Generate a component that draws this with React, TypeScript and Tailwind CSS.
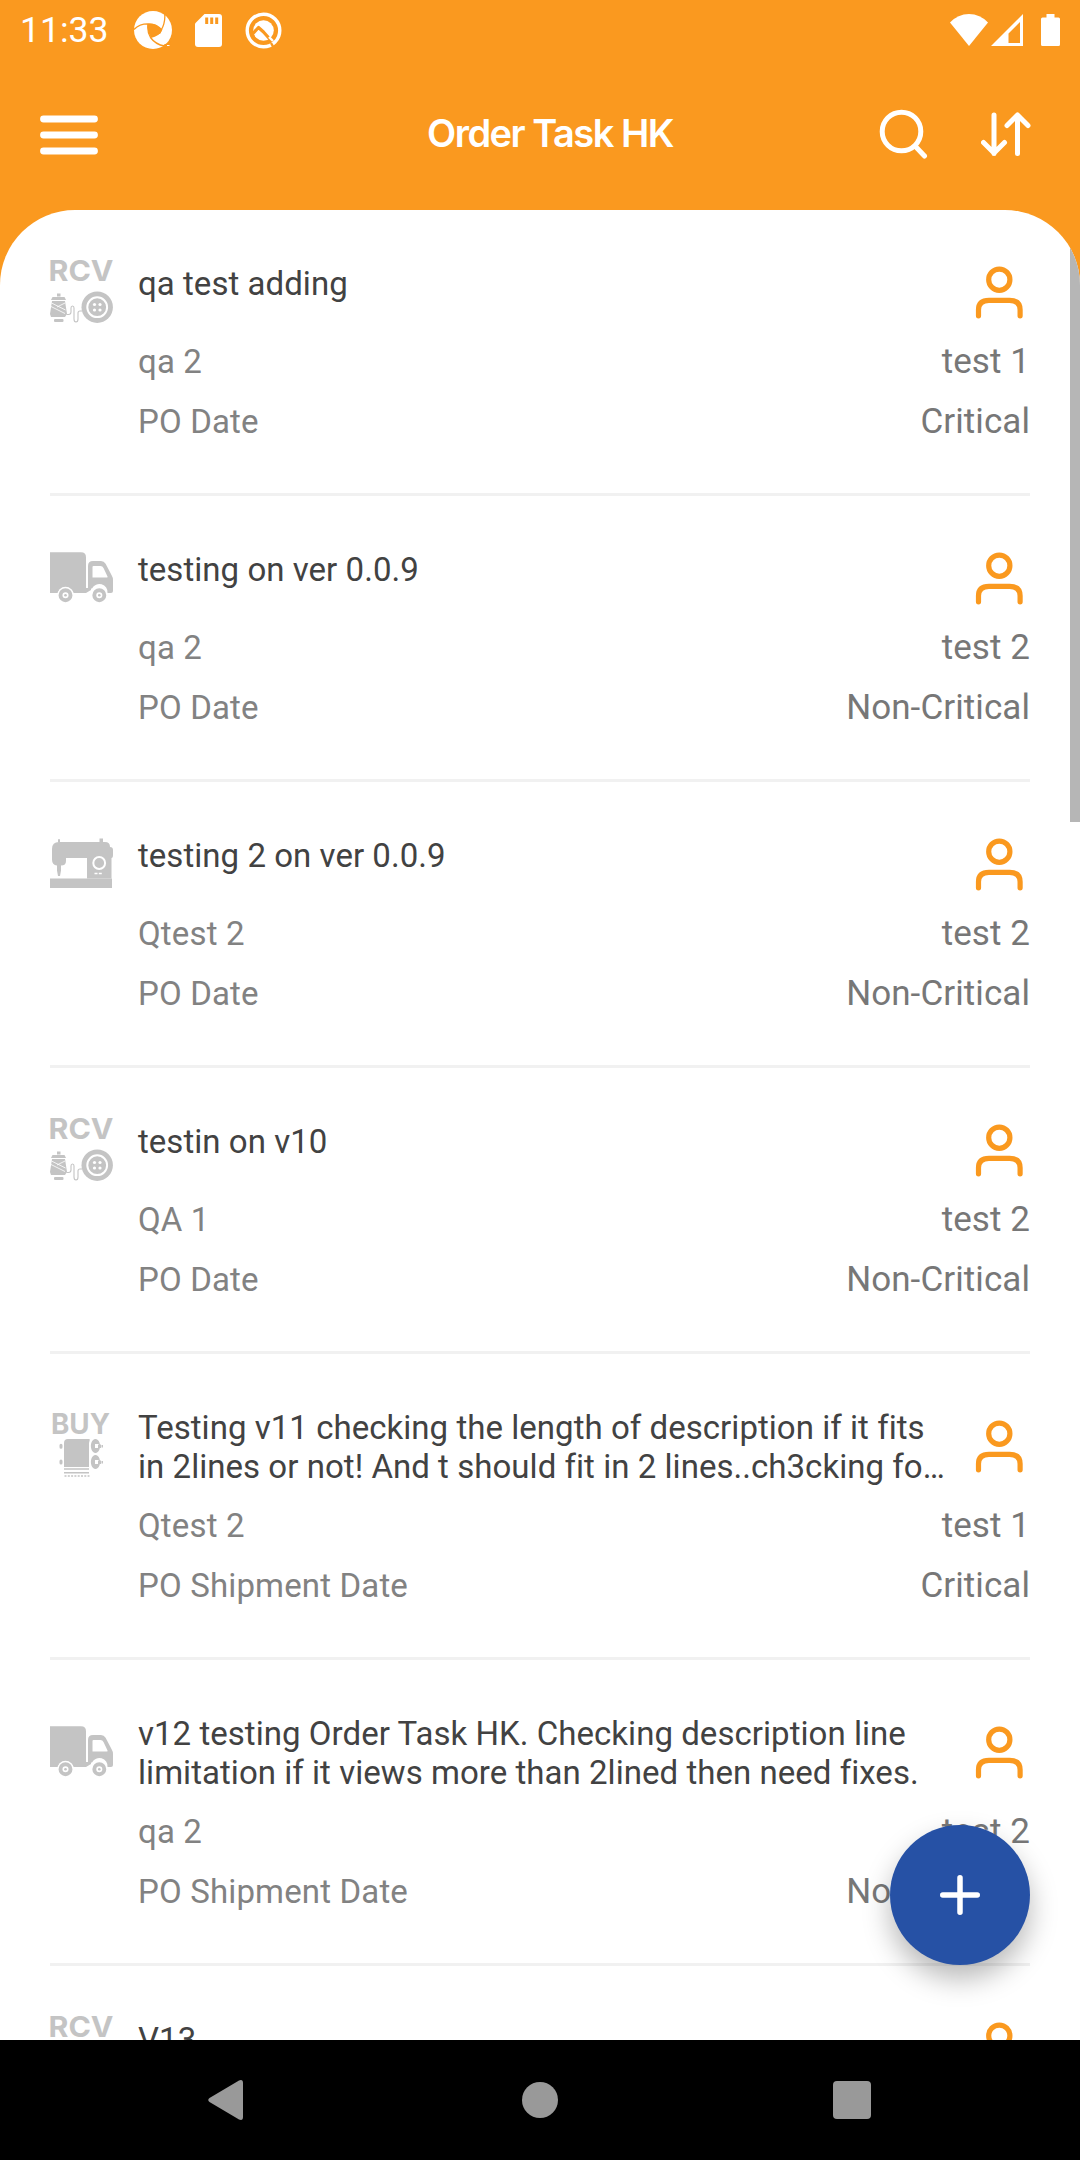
import React from "react";

type IconKind = "rcv" | "truck" | "sewing" | "buy";

interface Task {
  icon: IconKind;
  title: string[];
  owner: string;
  dateKind: string;
  test: string;
  priority: string;
}

const tasks: Task[] = [
  { icon: "rcv", title: ["qa test adding"], owner: "qa 2", dateKind: "PO Date", test: "test 1", priority: "Critical" },
  { icon: "truck", title: ["testing on ver 0.0.9"], owner: "qa 2", dateKind: "PO Date", test: "test 2", priority: "Non-Critical" },
  { icon: "sewing", title: ["testing 2 on ver 0.0.9"], owner: "Qtest 2", dateKind: "PO Date", test: "test 2", priority: "Non-Critical" },
  { icon: "rcv", title: ["testin on v10"], owner: "QA 1", dateKind: "PO Date", test: "test 2", priority: "Non-Critical" },
  {
    icon: "buy",
    title: ["Testing v11 checking the length of description if it fits", "in 2lines or not! And t should fit in 2 lines..ch3cking fo…"],
    owner: "Qtest 2",
    dateKind: "PO Shipment Date",
    test: "test 1",
    priority: "Critical",
  },
  {
    icon: "truck",
    title: ["v12 testing Order Task HK. Checking description line", "limitation if it views more than 2lined then need fixes."],
    owner: "qa 2",
    dateKind: "PO Shipment Date",
    test: "test 2",
    priority: "Non-Critical",
  },
  { icon: "rcv", title: ["V13"], owner: "qa 2", dateKind: "PO Date", test: "test 2", priority: "Critical" },
];

function RcvIcon() {
  return (
    <svg viewBox="0 0 63 63" className="size-[63px] shrink-0 overflow-visible" fill="#c4c4c4">
      <text x="-1.5" y="21" fontFamily="Inter" fontWeight="700" fontSize="29" textLength="65" lengthAdjust="spacingAndGlyphs">RCV</text>
      <rect x="7" y="33.5" width="3.5" height="3" />
      <path d="M2.5 37h12l1.500 3H1z" />
      <path d="M2 41h13l2 13-2 3H1L0 54z" />
      <path d="M1.500 43l14 7M1 46.500l14 7M15 43L7 47" stroke="#fff" strokeWidth="0.8" />
      <rect x="4" y="59" width="9.500" height="3" rx="1" />
      <path d="M16.500 54.500h2q2.500 0 2.500-2.500v-4q0-2 1.500-2t1.500 2v11q0 3 2 3t2-3v-6q0-2 2-2h2" fill="none" stroke="#c4c4c4" strokeWidth="1.100" />
      <circle cx="47.200" cy="47.200" r="15.700" />
      <circle cx="47.200" cy="47.200" r="9.900" fill="none" stroke="#fff" strokeWidth="2" />
      <g fill="#fff">
        <circle cx="44.500" cy="44.500" r="1.600" />
        <circle cx="50" cy="44.500" r="1.600" />
        <circle cx="44.500" cy="50" r="1.600" />
        <circle cx="50" cy="50" r="1.600" />
      </g>
    </svg>
  );
}

function TruckIcon() {
  return (
    <svg viewBox="0 0 63 63" className="size-[63px] shrink-0" fill="#c4c4c4">
      <path d="M0 6.200h31q5 0 5 5V47H23.500A8.200 8.200 0 0 0 8 47H0z" />
      <path fillRule="evenodd" d="M38 20q0-5 5-5h8q3 0 4.600 2.800L61.500 29q1.500 2.500 1.500 5v11q0 2-2 2h-3.500A8.200 8.200 0 0 0 42 42.500H38zM42.500 21v10.500h14.500q1 0 .5-1L53.500 22q-1-2-3-2H43.500q-1 0-1 1z" />
      <path d="M36 42h5v2l-5 3z" />
      <circle cx="15.500" cy="49" r="8.200" fill="#fff" />
      <circle cx="49.300" cy="49" r="8.200" fill="#fff" />
      <g fill="none" stroke="#c4c4c4" strokeWidth="3.900">
        <circle cx="15.500" cy="49.200" r="5" />
        <circle cx="49.300" cy="49.200" r="5" />
      </g>
      <circle cx="15.500" cy="49.200" r="1.300" />
      <circle cx="49.300" cy="49.200" r="1.300" />
    </svg>
  );
}

function SewingIcon() {
  return (
    <svg viewBox="0 0 63 63" className="size-[63px] shrink-0" fill="#c4c4c4">
      <path d="M8 7.500q1-1 2 0v3H8zM49.500 6.500h3.500v4h-3.500z" />
      <path d="M2 17q0-7 7-7h46q5 0 5 5 3 0 3 3v5q0 3-1.500 3v20.500H37V26H16v3q0 4.500-5 4.500v5L10 44H8l-1-5.500v-5q-5-.5-5-6z" />
      <path d="M0 46.500h62V56H0z" />
      <circle cx="49.200" cy="31" r="5.900" fill="none" stroke="#fff" strokeWidth="2" />
      <path d="M44.500 41.500h3M48.800 41.500h3" stroke="#fff" strokeWidth="1.400" />
    </svg>
  );
}

function BuyIcon() {
  return (
    <svg viewBox="0 0 63 63" className="size-[63px] shrink-0 overflow-visible" fill="#c4c4c4">
      <text x="1" y="20" fontFamily="Inter" fontWeight="700" fontSize="28" textLength="59" lengthAdjust="spacingAndGlyphs">BUY</text>
      <path d="M14 29q0-4 4-4h21q1.500 0 .5 2l-.5 2v24H14z" />
      <path d="M9.500 31.200a1.500 1.500 0 0 1 3 0v2a1.500 1.500 0 0 1-3 0zM9.500 47a1.500 1.500 0 0 1 3 0v2a1.500 1.500 0 0 1-3 0z" />
      <path fillRule="evenodd" d="M45.500 25a4.600 7 0 1 1-.1 0zM45 30h4v4h-4zM45.500 41a4.600 7 0 1 1-.1 0zM45 46h4v4h-4z" />
      <path d="M48 30.500h3v3.500h-3zM51.500 31h1.500v2.500h-1.500zM48 46.500h3V50h-3zM51.500 47h1.500v2.500h-1.500z" />
      <path d="M14 55h25M14 58.700h25" stroke="#c4c4c4" strokeWidth="1.600" />
      <path d="M14.500 62h25" stroke="#c4c4c4" strokeWidth="1.400" strokeDasharray="2 1.300" />
    </svg>
  );
}

const icons: Record<IconKind, () => React.JSX.Element> = { rcv: RcvIcon, truck: TruckIcon, sewing: SewingIcon, buy: BuyIcon };

function PersonIcon() {
  return (
    <svg viewBox="0 0 60 60" className="size-[60px] shrink-0" fill="none" stroke="#fa991f" strokeWidth="5.200" strokeLinecap="round">
      <circle cx="29.300" cy="17.700" r="10.600" />
      <path d="M8.500 53.800v-6q0-9.500 10.500-9.500h20.600q10.500 0 10.500 9.500v6" />
    </svg>
  );
}

function TaskRow({ task }: { task: Task }) {
  const Icon = icons[task.icon];
  return (
    <li className="mx-[50px] shrink-0 border-b-[3px] border-[#f1f1f1] pt-[50px] pb-[41px]">
      <div className="flex items-center">
        <Icon />
        <div className="min-w-0 flex-1 self-start pt-[4px] pb-px pl-[25px] text-[33px] leading-[39px] tracking-[0.04px] whitespace-nowrap text-[#424242]">
          {task.title.map((line) => (
            <div key={line}>{line}</div>
          ))}
        </div>
        <PersonIcon />
      </div>
      <div className="flex justify-between pt-[9px] pl-[88px] leading-[60px]">
        <div className="text-[33px] tracking-[0.15px] text-[#828282]">
          <div>{task.owner}</div>
          <div>{task.dateKind}</div>
        </div>
        <div className="text-right text-[35px] tracking-[0.08px] text-[#777]">
          <div>{task.test}</div>
          <div>{task.priority}</div>
        </div>
      </div>
    </li>
  );
}

function StatusBar() {
  return (
    <div className="flex h-[60px] shrink-0 items-center pr-5 pl-5 text-white">
      <span className="w-[114px] pt-0.5 text-[35.5px] leading-none">11:33</span>
      <svg viewBox="0 0 38 38" className="size-[38px]">
        <circle cx="19" cy="19" r="19" fill="#fff" />
        <path d="M13.500 13q5-1 9 1l5.500 4.500-1.500 4-9.500 4q-4-6-3.500-13.500z" fill="#fa991f" />
        <path d="M0 18.500q6-6 15-5.500 8 .5 13 6M30.500 1q1.500 10-3.500 18.500M28 18q-2 6-12 8.500M14 13q-1 8 2.500 13.500 5 7 14 8.500" fill="none" stroke="#fa991f" strokeWidth="1.300" />
        <path d="M30 33.500l8-3V38h-10z" fill="#fa991f" />
        <path d="M33 34.500h2.500" stroke="#fff" strokeWidth="1" />
      </svg>
      <svg viewBox="0 0 27 33" className="ml-[23px] h-[33px] w-[27px]">
        <path d="M9.500 0H24q3 0 3 3v27q0 3-3 3H3q-3 0-3-3V9.500z" fill="#fff" />
        <path d="M11.700 3.500v6.500M16.700 3.500v6.500M21.700 3.500v6.500" stroke="#fa991f" strokeWidth="3" />
      </svg>
      <svg viewBox="0 0 37 37" className="ml-[23px] size-[37px]">
        <circle cx="18.500" cy="18.500" r="16.300" fill="none" stroke="#fff" strokeWidth="3.400" />
        <circle cx="18.500" cy="18.500" r="10.300" fill="#fff" />
        <path d="M7 22.500l6.500-7 5 4.500 8 9" fill="none" stroke="#fa991f" strokeWidth="3.200" strokeLinejoin="round" />
        <path d="M24 25l4 4" stroke="#fff" strokeWidth="2.400" />
        <path d="M26 31l3.500 6" stroke="#fa991f" strokeWidth="2.400" />
      </svg>
      <div className="ml-auto flex items-center">
        <svg viewBox="0 0 38 32" className="h-8 w-[38px]" fill="#fff">
          <path d="M0 8.500Q8 0 19 0t19 8.500L19 32z" />
        </svg>
        <svg viewBox="0 0 32 32" className="ml-[3px] size-8" fill="#fff">
          <path fillRule="evenodd" d="M32 0v32H0zM29 8L17.500 19.500v9.500H29z" />
        </svg>
        <svg viewBox="0 0 19 32" className="ml-[18px] h-8 w-[19px]" fill="#fff">
          <path d="M5.500 0h8v3.500H17.500q1.500 0 1.500 1.500V30.500q0 1.500-1.500 1.500H1.500Q0 32 0 30.500V5q0-1.500 1.500-1.500h4z" />
        </svg>
      </div>
    </div>
  );
}

function AppBar() {
  return (
    <header className="grid h-[150px] shrink-0 grid-cols-3 items-center px-10 text-white">
      <svg viewBox="0 0 58 40" className="h-10 w-[58px]" stroke="#fff" strokeWidth="6.800" strokeLinecap="round">
        <path d="M3.500 4h51M3.500 20h51M3.500 36h51" />
      </svg>
      <h1 className="mt-[-3px] pl-5 text-center font-[Inter] text-[38px] font-semibold tracking-[-1.5px] whitespace-nowrap">Order Task HK</h1>
      <div className="flex items-center justify-end gap-[52px] pr-[9px]">
        <svg viewBox="0 0 50 50" className="mt-[-3px] size-[50px]" fill="none" stroke="#fff" strokeWidth="5" strokeLinecap="round">
          <circle cx="22.500" cy="22.500" r="19.300" />
          <path d="M36.500 37.500l9 9.500" />
        </svg>
        <svg viewBox="0 0 50 44" className="mt-[-2px] h-[44px] w-[50px]" fill="none" stroke="#fff" strokeWidth="5" strokeLinecap="round" strokeLinejoin="round">
          <path d="M13 3v38.500M2.500 30.500L13 41l10.500-10.500M36.500 41.500V3M26 13.500L36.500 3 47 13.500" />
        </svg>
      </div>
    </header>
  );
}

export default function App() {
  return (
    <div className="relative flex h-[2160px] w-[1080px] flex-col overflow-hidden bg-[#fa991f] font-[Roboto,sans-serif]">
      <StatusBar />
      <AppBar />
      <main className="relative h-[1830px] shrink-0 overflow-hidden rounded-t-[75px] bg-white">
        <ul className="flex flex-col">
          {tasks.map((task, i) => (
            <TaskRow key={i} task={task} />
          ))}
        </ul>
        <div className="absolute top-0 right-0 h-[612px] w-[10px] bg-[#b6b6b6]" />
        <button
          aria-label="Add task"
          className="absolute right-[50px] bottom-[75px] flex size-[140px] items-center justify-center rounded-full bg-[#2651a5] shadow-[0_14px_28px_rgba(0,0,0,0.28)]"
        >
          <svg viewBox="0 0 40 40" className="size-10" stroke="#fff" strokeWidth="5.500" strokeLinecap="round">
            <path d="M20 2.750v34.500M2.750 20h34.500" />
          </svg>
        </button>
      </main>
      <nav className="flex h-[120px] shrink-0 items-center bg-black">
        <svg viewBox="0 0 36 40" className="ml-[208px] h-10 w-9" fill="#999">
          <path d="M1.500 18L31 .5Q35 -1 35 3v34q0 4-4 2.500L1.500 22Q-1 20 1.500 18z" />
        </svg>
        <div className="ml-[278px] size-9 rounded-full bg-[#999]" />
        <div className="ml-[275px] size-[38px] rounded-[4px] bg-[#999]" />
      </nav>
    </div>
  );
}
